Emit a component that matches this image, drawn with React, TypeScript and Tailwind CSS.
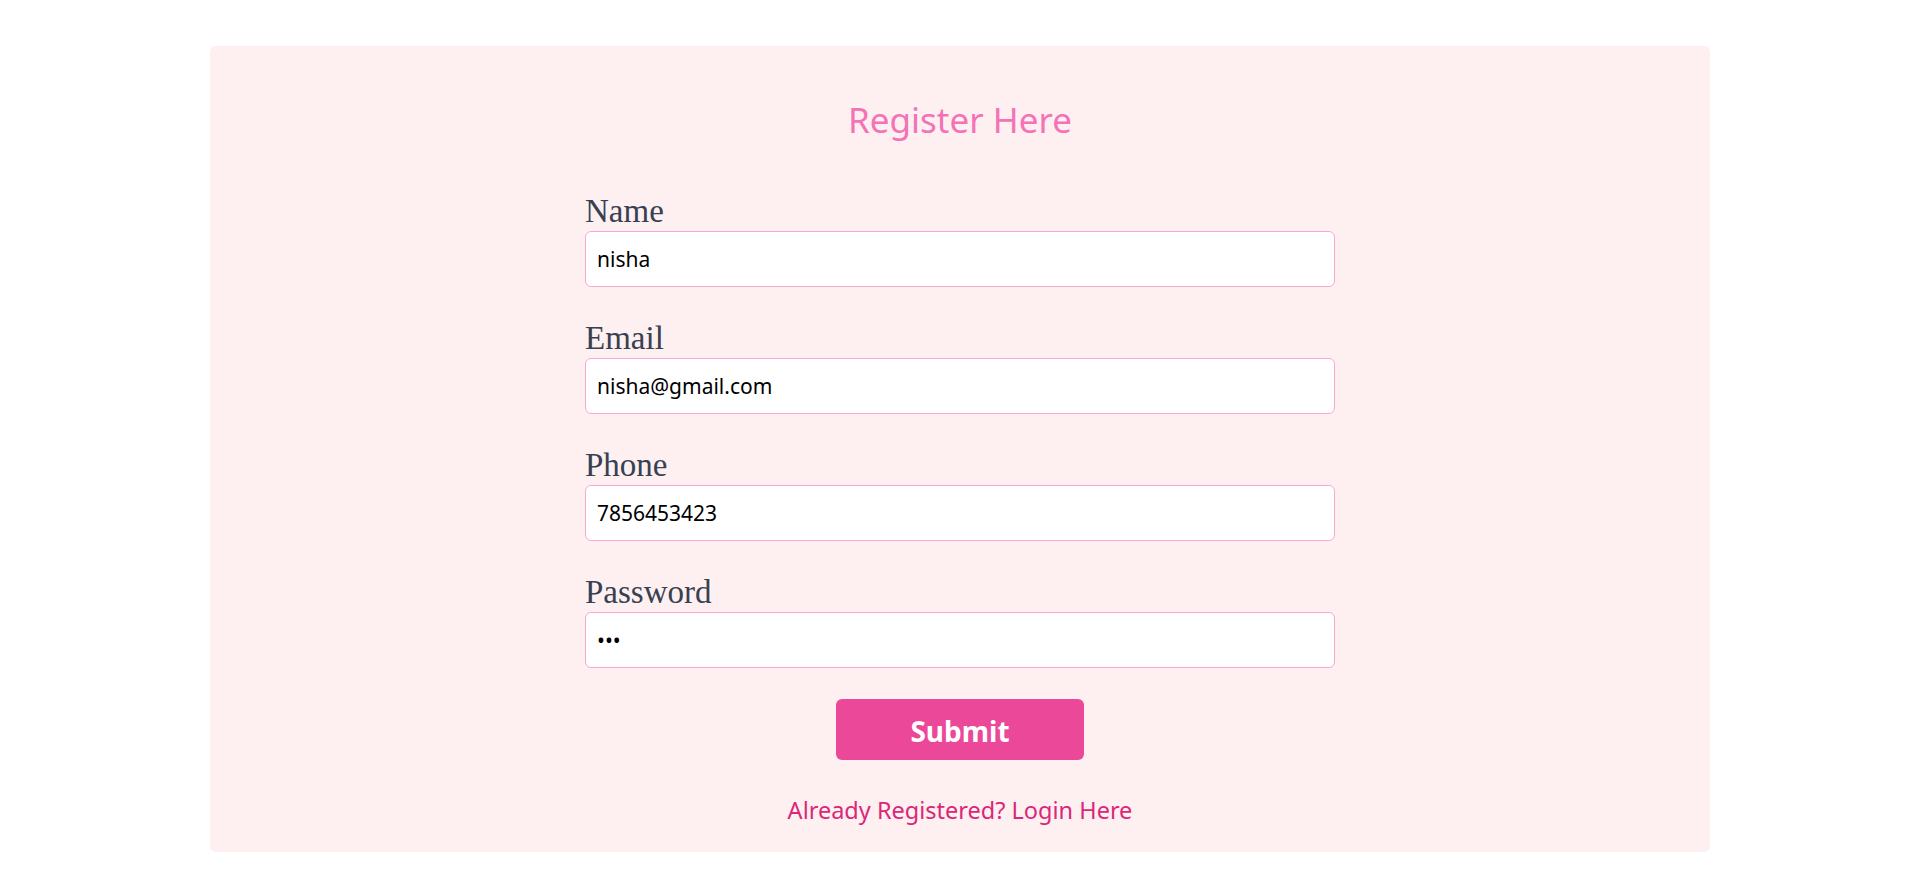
import React from "react";

const sans = { fontFamily: '"Noto Sans", "Open Sans", sans-serif' };

function Field({ label, value, type = "text" }: { label: string; value: string; type?: string }) {
  return (
    <div className="flex flex-col">
      <label className="text-[33px] leading-10 text-[#374151] font-['Liberation_Serif',serif]">{label}</label>
      <input
        type={type}
        value={value}
        readOnly
        className="h-14 w-full rounded-md border border-[#f9a8d4] bg-white pl-[11px] text-[21px] text-black outline-none font-['Noto_Sans',sans-serif]"
      />
    </div>
  );
}

export default function App() {
  return (
    <div className="min-h-screen w-full bg-white pt-[46px]" style={sans}>
      <div className="ml-[210px] w-[1500px] rounded-md bg-[#fef0f1] pt-[54px] pb-[28px]">
        <h1 className="text-center text-[35px] leading-10 text-[#f472b6] font-['Noto_Sans',sans-serif]">Register Here</h1>
        <div className="mx-auto mt-[51px] flex w-[750px] flex-col gap-[31px]">
          <Field label="Name" value="nisha" />
          <Field label="Email" value="nisha@gmail.com" />
          <Field label="Phone" value="7856453423" />
          <Field label="Password" value="abc" type="password" />
        </div>
        <div className="mt-[31px] flex justify-center">
          <button className="h-[61px] w-[248px] rounded-md bg-[#ec4899] pt-[3px] text-[28px] font-bold text-white font-['Noto_Sans',sans-serif]">
            Submit
          </button>
        </div>
        <div className="mt-9 text-center text-[23.5px] leading-7 text-[#db2777] font-['Noto_Sans',sans-serif]">
          Already Registered? Login Here
        </div>
      </div>
    </div>
  );
}
